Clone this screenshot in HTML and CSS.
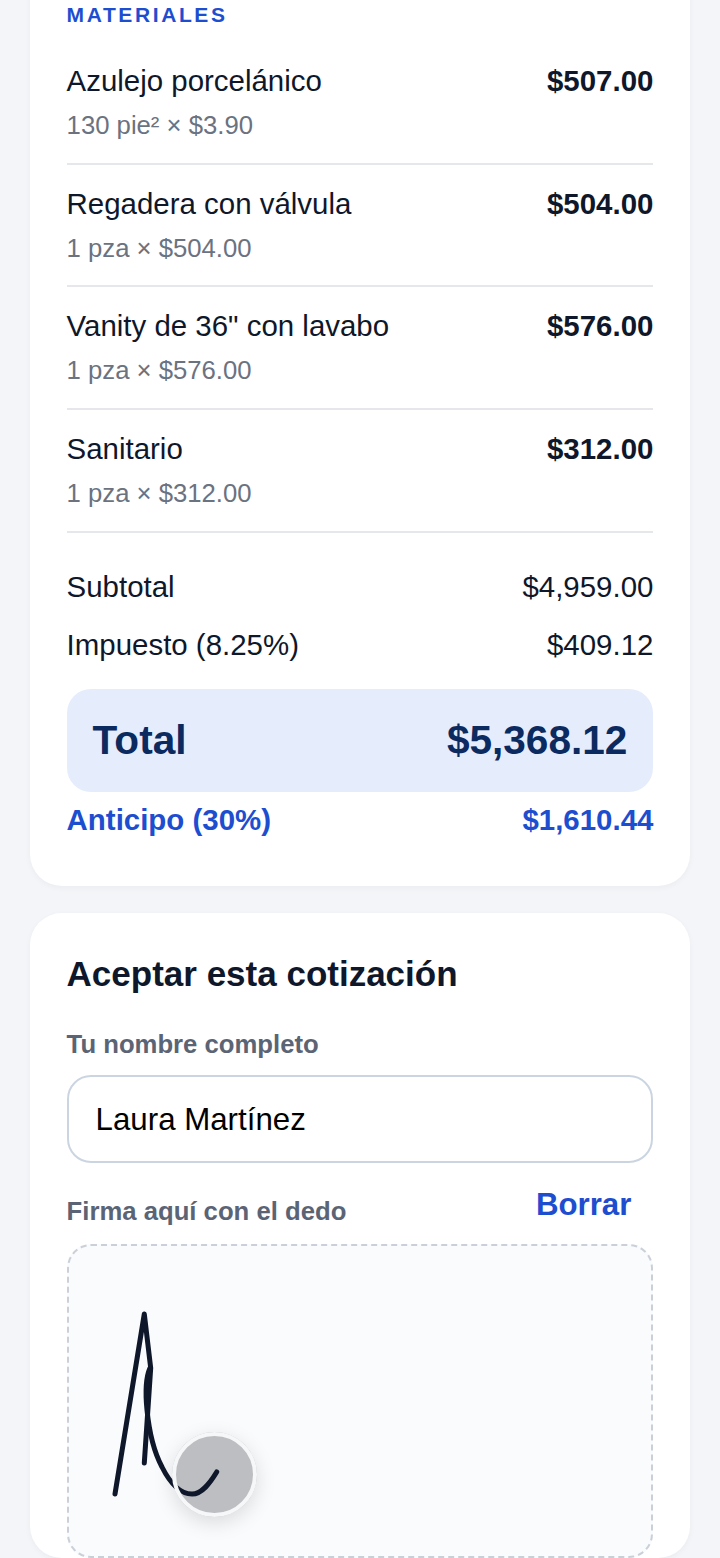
FILE: index.html
```html
<!DOCTYPE html>
<html lang="es">
<head>
    <meta charset="UTF-8">
    <title>Cotización</title>
    <link rel="stylesheet" href="styles.css">
</head>
<body>
<div class="page">
    <section class="card card-quote">
        <h2 class="section-title">MATERIALES</h2>

        <div class="item">
            <div class="item-info">
                <div class="item-name">Azulejo porcelánico</div>
                <div class="item-qty">130 pie² × $3.90</div>
            </div>
            <div class="item-price">$507.00</div>
        </div>
        <div class="item">
            <div class="item-info">
                <div class="item-name">Regadera con válvula</div>
                <div class="item-qty">1 pza × $504.00</div>
            </div>
            <div class="item-price">$504.00</div>
        </div>
        <div class="item">
            <div class="item-info">
                <div class="item-name">Vanity de 36" con lavabo</div>
                <div class="item-qty">1 pza × $576.00</div>
            </div>
            <div class="item-price">$576.00</div>
        </div>
        <div class="item">
            <div class="item-info">
                <div class="item-name">Sanitario</div>
                <div class="item-qty">1 pza × $312.00</div>
            </div>
            <div class="item-price">$312.00</div>
        </div>

        <div class="sum-row sum-first"><span>Subtotal</span><span>$4,959.00</span></div>
        <div class="sum-row"><span>Impuesto (8.25%)</span><span>$409.12</span></div>
        <div class="total-box"><span>Total</span><span>$5,368.12</span></div>
        <div class="deposit-row"><span>Anticipo (30%)</span><span>$1,610.44</span></div>
    </section>

    <section class="card card-accept">
        <h3 class="accept-title">Aceptar esta cotización</h3>
        <label class="field-label" for="name">Tu nombre completo</label>
        <input class="name-input" id="name" type="text" value="Laura Martínez">
        <div class="sign-head">
            <span class="field-label">Firma aquí con el dedo</span>
            <button class="clear-btn" type="button">Borrar</button>
        </div>
        <div class="sign-pad">
            <div class="touch-dot"></div>
            <svg class="sign-svg" viewBox="0 0 587 312" fill="none" stroke="#0f172a" stroke-width="5" stroke-linecap="round" stroke-linejoin="round">
                <path d="M48 249 L77.3 69 L83.7 123 L77.3 218"/>
                <path d="M83 123 C79 132 78.5 150 80 165 C82 185 87 207 95 222 C103 238 112 249 125 249 C135 249 143 238 149.7 227"/>
            </svg>
            <div class="touch-ring"></div>
        </div>
    </section>
</div>
</body>
</html>
```

FILE: styles.css
```css
html, body {
    margin: 0;
    padding: 0;
}
body {
    background-color: #f3f5f9;
    font-family: "Liberation Sans", Arial, sans-serif;
    color: #0f172a;
}
.page {
    height: 1558px;
    overflow: hidden;
    padding: 0 30px;
    box-sizing: border-box;
}
.card {
    background-color: #fff;
    border-radius: 32px;
    padding: 0 36.6px;
    box-shadow: 0 2px 6px rgba(15, 23, 42, 0.04);
}
.card-quote {
    margin-top: -40px;
    padding-top: 43px;
    padding-bottom: 49px;
}
.section-title {
    margin: 0 0 15px;
    font-size: 21px;
    line-height: 24px;
    letter-spacing: 2.6px;
    font-weight: 700;
    color: #1d4ed0;
}
.item {
    display: flex;
    justify-content: space-between;
    height: 120.67px;
    border-bottom: 2px solid #e5e7eb;
}
.item-name {
    font-size: 29.44px;
    line-height: 34px;
    padding-top: 22px;
}
.item-qty {
    font-size: 25.7px;
    line-height: 30px;
    margin-top: 12px;
    color: #6b7280;
}
.item-price {
    font-size: 29.44px;
    line-height: 34px;
    padding-top: 22px;
    font-weight: 700;
}
.sum-row {
    display: flex;
    justify-content: space-between;
    font-size: 29.44px;
    line-height: 34px;
    margin-top: 24px;
}
.sum-first {
    margin-top: 37px;
}
.total-box {
    display: flex;
    justify-content: space-between;
    align-items: center;
    height: 103px;
    margin-top: 27px;
    padding: 0 26px;
    background-color: #e5ecfc;
    border-radius: 24px;
    font-size: 40.6px;
    font-weight: 700;
    color: #0b2a60;
}
.deposit-row {
    display: flex;
    justify-content: space-between;
    font-size: 29.44px;
    line-height: 34px;
    margin-top: 11px;
    font-weight: 700;
    color: #1d4ed0;
}
.card-accept {
    margin-top: 27px;
    padding-top: 41.5px;
}
.accept-title {
    margin: 0;
    font-size: 35px;
    line-height: 40px;
    font-weight: 700;
}
.field-label {
    display: block;
    font-size: 25.7px;
    line-height: 30px;
    font-weight: 700;
    color: #5b6475;
}
.card-accept > .field-label {
    margin-top: 35px;
}
.name-input {
    display: block;
    width: 100%;
    height: 88px;
    margin-top: 16px;
    padding: 2px 27px 0;
    box-sizing: border-box;
    border: 2px solid #cbd5e1;
    border-radius: 24px;
    background-color: #fff;
    font-family: "Liberation Sans", Arial, sans-serif;
    font-size: 31.25px;
    color: #000;
}
.sign-head {
    display: flex;
    justify-content: space-between;
    margin-top: 20px;
}
.sign-head .field-label {
    margin-top: 13px;
}
.clear-btn {
    border: none;
    background: none;
    padding: 0 22px;
    height: 44px;
    font-family: "Liberation Sans", Arial, sans-serif;
    font-size: 31.25px;
    font-weight: 700;
    color: #1d4ed0;
}
.sign-pad {
    position: relative;
    height: 314px;
    margin-top: 17px;
    box-sizing: border-box;
    border: 2px dashed #cbd0d8;
    border-radius: 24px;
    background-color: #f9fbfd;
}
.sign-svg {
    position: absolute;
    left: -2px;
    top: -1px;
    width: 587px;
    height: 312px;
}
.touch-dot,
.touch-ring {
    position: absolute;
    left: 103.5px;
    top: 185.5px;
    width: 85px;
    height: 85px;
    box-sizing: border-box;
    border-radius: 50%;
}
.touch-dot {
    background-color: #bdbec1;
    box-shadow: 0 6px 20px rgba(0, 0, 0, 0.13);
}
.touch-ring {
    border: 4px solid #f6f7f8;
}
```
